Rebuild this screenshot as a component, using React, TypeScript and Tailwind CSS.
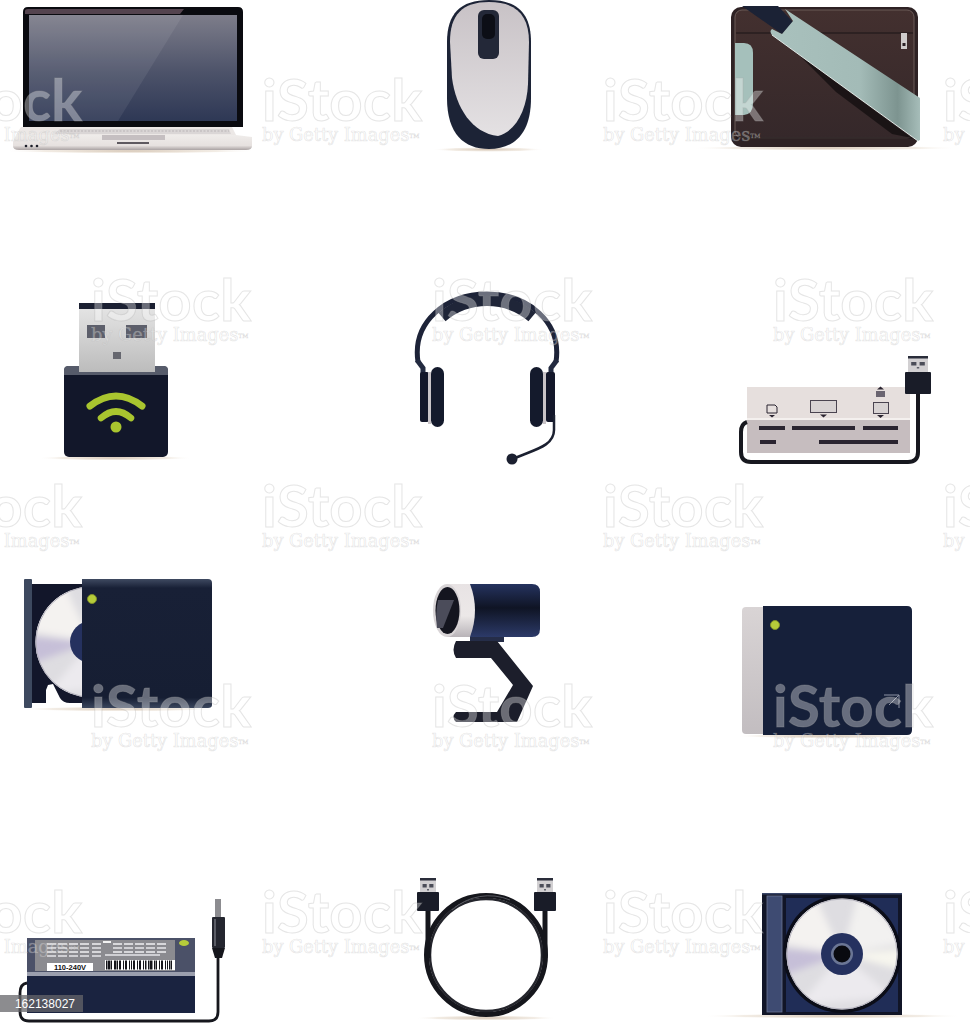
import React from 'react';

const COLS = [
  { x: 0, w: 323 },
  { x: 323, w: 324 },
  { x: 647, w: 323 },
];
const ROW_H = 256;

// watermark origins, they repeat in a staggered pattern over the whole picture
const MARKS = [
  { x: -78, y: 70 }, { x: 262, y: 70 }, { x: 603, y: 70 }, { x: 943, y: 70 },
  { x: 91, y: 270 }, { x: 432, y: 270 }, { x: 773, y: 270 },
  { x: -78, y: 476 }, { x: 262, y: 476 }, { x: 603, y: 476 }, { x: 943, y: 476 },
  { x: 91, y: 676 }, { x: 432, y: 676 }, { x: 773, y: 676 },
  { x: -78, y: 882 }, { x: 262, y: 882 }, { x: 603, y: 882 }, { x: 943, y: 882 },
];

function Cell({ col, row, children }: { col: number; row: number; children: React.ReactNode }) {
  const { x, w } = COLS[col];
  return (
    <svg width={w} height={ROW_H} viewBox={`${x} ${row * ROW_H} ${w} ${ROW_H}`} className="block">
      {children}
    </svg>
  );
}

function Floor({ id, cx, cy, rx }: { id: string; cx: number; cy: number; rx: number }) {
  return (
    <>
      <defs>
        <radialGradient id={id}>
          <stop offset="0%" stopColor="#cdbba8" stopOpacity="0.9" />
          <stop offset="70%" stopColor="#e6dacb" stopOpacity="0.5" />
          <stop offset="100%" stopColor="#ffffff" stopOpacity="0" />
        </radialGradient>
      </defs>
      <ellipse cx={cx} cy={cy} rx={rx} ry={2.5} fill={`url(#${id})`} />
    </>
  );
}

// compact disc with soft light wedges
function Disc({ id, cx, cy, r, hub }: { id: string; cx: number; cy: number; r: number; hub: number }) {
  const wedge = (a: number, b: number) => {
    const p = (t: number) => `${cx + Math.cos((t * Math.PI) / 180) * r * 1.2} ${cy + Math.sin((t * Math.PI) / 180) * r * 1.2}`;
    return `M${cx} ${cy} L${p(a)} L${p(b)} Z`;
  };
  return (
    <>
      <defs>
        <clipPath id={`${id}-clip`}>
          <circle cx={cx} cy={cy} r={r} />
        </clipPath>
        <filter id={`${id}-blur`} x="-30%" y="-30%" width="160%" height="160%">
          <feGaussianBlur stdDeviation={r / 14} />
        </filter>
      </defs>
      <circle cx={cx} cy={cy} r={r} fill="#dedde1" />
      <g clipPath={`url(#${id}-clip)`}>
        <g filter={`url(#${id}-blur)`}>
          <path d={wedge(-75, -10)} fill="#f2f1f0" />
          <path d={wedge(-170, -115)} fill="#f4f2f0" />
          <path d={wedge(160, 185)} fill="#c6bfd8" />
          <path d={wedge(-5, 15)} fill="#f7f6ee" />
          <path d={wedge(40, 130)} fill="#eceaee" />
        </g>
      </g>
      <circle cx={cx} cy={cy} r={r - 0.5} fill="none" stroke="#b4b2bd" strokeWidth={1} />
      <circle cx={cx} cy={cy} r={hub} fill="#25315f" />
    </>
  );
}

function UsbHead({ x, y, w, h, plugH }: { x: number; y: number; w: number; h: number; plugH: number }) {
  const px = x + 3;
  const pw = w - 6;
  return (
    <>
      <rect x={px} y={y - plugH} width={pw} height={plugH} fill="#d2d0d2" />
      <rect x={px} y={y - plugH} width={pw} height={2.5} fill="#2a2d3a" />
      <rect x={px + pw * 0.16} y={y - plugH + 6} width={pw * 0.26} height={3.5} fill="#4b4d58" />
      <rect x={px + pw * 0.58} y={y - plugH + 6} width={pw * 0.26} height={3.5} fill="#4b4d58" />
      <rect x={px + pw * 0.44} y={y - plugH + 11} width={pw * 0.12} height={1.5} fill="#5e606a" />
      <rect x={x} y={y} width={w} height={h} rx={1} fill="#191c28" />
    </>
  );
}

// ---- row 1 ----
function Laptop() {
  return (
    <Cell col={0} row={0}>
      <defs>
        <linearGradient id="lap-screen" x1="0" y1="0" x2="0" y2="1">
          <stop offset="0%" stopColor="#7d7d8a" />
          <stop offset="55%" stopColor="#4c5269" />
          <stop offset="100%" stopColor="#2e3855" />
        </linearGradient>
        <linearGradient id="lap-base" x1="0" y1="0" x2="0" y2="1">
          <stop offset="0%" stopColor="#efecea" />
          <stop offset="70%" stopColor="#e6e1df" />
          <stop offset="100%" stopColor="#a9a2a2" />
        </linearGradient>
      </defs>
      <Floor id="lap-floor" cx={130} cy={151} rx={128} />
      <path d="M23 127 V12 Q23 7 28 7 H238 Q243 7 243 12 V127 Z" fill="#0a0b10" />
      <path d="M25 14 V11 Q25 9 28 9 H184 L180 14 Z" fill="#54444f" />
      <rect x={29} y={15} width={208} height={106} fill="url(#lap-screen)" />
      <path d="M29 15 H183 L118 121 H29 Z" fill="#ffffff" opacity="0.07" />
      <path d="M21 127 H232 L236 135 H16 Z" fill="#ece8e6" />
      <path d="M60 129 H229 L231 134 H54 Z" fill="#dad6d6" />
      <path d="M60 131 H229" stroke="#b9b4b6" strokeWidth="1" strokeDasharray="2 1.5" />
      <path d="M16 135 H236 L252 137 V146 Q252 150 246 150 H19 Q13 150 13 146 V142 Z" fill="url(#lap-base)" />
      <rect x={102} y={135} width={63} height={5} fill="#c5bfc1" />
      <rect x={117} y={142} width={32} height={2} fill="#5e5a60" />
      <circle cx={26} cy={146} r={1.3} fill="#1c1e28" />
      <circle cx={31.5} cy={146} r={1.3} fill="#1c1e28" />
      <circle cx={37} cy={146} r={1.3} fill="#1c1e28" />
    </Cell>
  );
}

function Mouse() {
  return (
    <Cell col={1} row={0}>
      <defs>
        <linearGradient id="mouse-body" x1="0" y1="0" x2="0" y2="1">
          <stop offset="0%" stopColor="#c8c2c6" />
          <stop offset="100%" stopColor="#e4e1e3" />
        </linearGradient>
      </defs>
      <Floor id="mouse-floor" cx={488} cy={149.5} rx={56} />
      <path d="M489 0 C460 0 447 14 447 42 L447 98 C447 134 464 149 489 149 C514 149 531 134 531 98 L531 42 C531 14 518 0 489 0 Z" fill="#1c2336" />
      <path d="M489 2 C462 2 450 15 450 42 L452 78 C456 108 472 133 498 136 C517 131 527 108 528 84 L529 42 C529 15 516 2 489 2 Z" fill="url(#mouse-body)" />
      <rect x={478} y={10} width={21} height={49} rx={6} fill="#232838" />
      <rect x={482} y={14} width={13} height={25} rx={5} fill="#0c0e16" />
    </Cell>
  );
}

function Bag() {
  return (
    <Cell col={2} row={0}>
      <defs>
        <linearGradient id="bag-body" x1="0" y1="0" x2="0" y2="1">
          <stop offset="0%" stopColor="#43302f" />
          <stop offset="100%" stopColor="#35282a" />
        </linearGradient>
        <linearGradient id="bag-strap" x1="0" y1="0" x2="1" y2="0">
          <stop offset="0%" stopColor="#a9c1bd" />
          <stop offset="60%" stopColor="#a3bbb7" />
          <stop offset="85%" stopColor="#7d9490" />
          <stop offset="100%" stopColor="#a6bdb9" />
        </linearGradient>
      </defs>
      <Floor id="bag-floor" cx={825} cy={148} rx={135} />
      <rect x={731} y={7} width={187} height={140} rx={10} fill="#2e2224" />
      <rect x={735} y={10} width={179} height={128} rx={7} fill="url(#bag-body)" stroke="#6a5a57" strokeWidth="1" />
      <path d="M736 138 H913" stroke="#1b1416" strokeWidth="1.2" />
      <path d="M736 33 H913" stroke="#1b1416" strokeWidth="1.2" />
      <rect x={901} y={33} width={6} height={16} fill="#cfcccb" />
      <rect x={902.5} y={43} width={3} height={3} fill="#2a2024" />
      <path d="M735 43 H744 Q753 43 753 53 V104 Q753 114 744 115 H735 Z" fill="#a5c0bb" />
      <path d="M800 56 L912 138 L892 134 L836 92 Z" fill="#120d0f" opacity="0.75" />
      <path d="M742 6 H778 L793 22 L782 34 Z" fill="#1b2235" />
      <path d="M785 9 L920 98 V140 L918 141 L772 35 Q769 31 772 29 L782 34 L793 21 Z" fill="url(#bag-strap)" />
      <path d="M772 35 L918 141" stroke="#dfe9e6" strokeWidth="1" />
    </Cell>
  );
}

// ---- row 2 ----
function UsbDongle() {
  return (
    <Cell col={0} row={1}>
      <defs>
        <linearGradient id="dongle-plug" x1="0" y1="0" x2="0" y2="1">
          <stop offset="0%" stopColor="#e3e3e3" />
          <stop offset="100%" stopColor="#bcbcbc" />
        </linearGradient>
      </defs>
      <Floor id="dongle-floor" cx={115} cy={458} rx={78} />
      <rect x={64} y={366} width={104} height={91} rx={5} fill="#12172a" />
      <path d="M64 375 V370 Q64 366 68 366 H164 Q168 366 168 370 V375 Z" fill="#565b6a" />
      <rect x={79} y={309} width={76} height={63} fill="url(#dongle-plug)" />
      <rect x={79} y={303} width={76} height={6} fill="#1b2032" />
      <rect x={87} y={325} width={18} height={13} fill="#5d5f6b" />
      <rect x={126} y={325} width={21} height={13} fill="#5d5f6b" />
      <rect x={113} y={352} width={8} height={7} fill="#66676f" />
      <path d="M90 406 Q116 386 142 406" fill="none" stroke="#a9c52f" strokeWidth="7" strokeLinecap="round" />
      <path d="M101 418 Q116 405 131 418" fill="none" stroke="#a9c52f" strokeWidth="6.5" strokeLinecap="round" />
      <circle cx={116} cy={427} r={5.5} fill="#a9c52f" />
    </Cell>
  );
}

function Headset() {
  return (
    <Cell col={1} row={1}>
      <path d="M418 362 C412 322 446 294 487 294 C528 294 562 322 556 362" fill="none" stroke="#1d2338" strokeWidth="5" />
      <path d="M442 317 C468 295 506 295 532 317" fill="none" stroke="#1f2538" strokeWidth="11" />
      <path d="M417 360 L423 368 V396 L428 396 L431 392" fill="none" stroke="#232a40" strokeWidth="5" />
      <path d="M557 360 L551 368 V396 L546 396 L543 392" fill="none" stroke="#232a40" strokeWidth="5" />
      <rect x={420} y={372} width={9} height={50} rx={2} fill="#13172a" />
      <rect x={428} y={372} width={3} height={52} fill="#c9c4c8" />
      <rect x={431} y={367} width={13} height={60} rx={6.5} fill="#141a2c" />
      <rect x={546} y={372} width={9} height={50} rx={2} fill="#13172a" />
      <rect x={543} y={372} width={3} height={52} fill="#c9c4c8" />
      <rect x={530} y={367} width={13} height={60} rx={6.5} fill="#141a2c" />
      <path d="M554 415 V430 C554 447 532 450 513 459" fill="none" stroke="#1b2030" strokeWidth="2.5" />
      <circle cx={512} cy={459} r={5.5} fill="#1b2030" />
    </Cell>
  );
}

function CardReader() {
  const dark = '#2a2430';
  return (
    <Cell col={2} row={1}>
      <rect x={747} y={387} width={163} height={32} fill="#e6dfdd" />
      <rect x={747} y={418} width={163} height={2} fill="#f4f0ee" />
      <rect x={747} y={420} width={163} height={33} fill="#c6bdbf" />
      <rect x={759} y={426} width={26} height={4} fill={dark} />
      <rect x={792} y={426} width={63} height={4} fill={dark} />
      <rect x={863} y={426} width={35} height={4} fill={dark} />
      <rect x={760} y={440} width={16} height={4} fill={dark} />
      <rect x={819} y={440} width={79} height={4} fill={dark} />
      <path d="M767 405 H775 L777 407 V413 H767 Z" fill="#e6dfdd" stroke={dark} strokeWidth="1" />
      <path d="M769 415 H775 L772 417.5 Z" fill={dark} />
      <rect x={810.5} y={400.5} width={26} height={12} fill="#d8d3d3" stroke="#4a4450" strokeWidth="1" />
      <path d="M820 414.5 H827 L823.5 417.5 Z" fill={dark} />
      <rect x={873.5} y={402.5} width={15} height={11} fill="#d8d3d3" stroke="#4a4450" strokeWidth="1" />
      <path d="M877 415 H884 L880.5 418 Z" fill={dark} />
      <rect x={876} y={391} width={9} height={6} fill="#6a6470" />
      <path d="M877 389.5 H884 L880.5 386.5 Z" fill={dark} />
      <path d="M918 394 V452 Q918 462 908 462 H751 Q741 462 741 452 V432 Q741 424 747 422" fill="none" stroke="#17181f" strokeWidth="4" />
      <UsbHead x={905} y={372} w={26} h={22} plugH={16} />
    </Cell>
  );
}

// ---- row 3 ----
function OpticalDrive() {
  return (
    <Cell col={0} row={2}>
      <defs>
        <linearGradient id="drive-body" x1="0" y1="0" x2="0" y2="1">
          <stop offset="0%" stopColor="#3f4a61" />
          <stop offset="7%" stopColor="#182036" />
          <stop offset="92%" stopColor="#161e33" />
          <stop offset="100%" stopColor="#3b465d" />
        </linearGradient>
      </defs>
      <Floor id="drive-floor" cx={120} cy={709} rx={100} />
      <rect x={32} y={584} width={52} height={119} fill="#12162a" />
      <path d="M48 685 L53 684 L60 698 Q63 703 70 703 H84 V706 H46 V690 Z" fill="#ffffff" />
      <Disc id="drive-disc" cx={91} cy={642} r={55.5} hub={21} />
      <rect x={24} y={579} width={8} height={129} rx={1} fill="#3d495f" />
      <path d="M82 579 H208 Q212 579 212 583 V705 Q212 708 208 708 H82 Z" fill="url(#drive-body)" />
      <circle cx={92} cy={599} r={4.5} fill="#b6cc3a" stroke="#7f8f2a" strokeWidth="1" />
    </Cell>
  );
}

function Webcam() {
  return (
    <Cell col={1} row={2}>
      <defs>
        <linearGradient id="cam-barrel" x1="0" y1="0" x2="0" y2="1">
          <stop offset="0%" stopColor="#25335f" />
          <stop offset="45%" stopColor="#0f1424" />
          <stop offset="100%" stopColor="#2c3a68" />
        </linearGradient>
        <linearGradient id="cam-ring" x1="0" y1="0" x2="0" y2="1">
          <stop offset="0%" stopColor="#e8e3e4" />
          <stop offset="60%" stopColor="#ece8e8" />
          <stop offset="100%" stopColor="#b8b3b8" />
        </linearGradient>
      </defs>
      <path d="M470 637 H504 V642 H470 Z" fill="#252d48" />
      <path d="M456 641 H497 L533 686 L517 722 H456 Q451 717 456 712 H497 L513 685 L491 658 H456 Q451 650 456 641 Z" fill="#1c1e2b" />
      <path d="M470 584 H532 Q540 584 540 592 V629 Q540 637 532 637 H470 Z" fill="url(#cam-barrel)" />
      <path d="M447 584 H470 Q480 610 470 637 H447 Z" fill="url(#cam-ring)" />
      <ellipse cx={447} cy={610.5} rx={14} ry={26.5} fill="#d8d4d6" />
      <ellipse cx={447.5} cy={610.5} rx={12} ry={23.5} fill="#14151f" />
      <path d="M438 600 L454 600 L443 628 L437 628 Q435 614 438 600 Z" fill="#4b4c5a" />
    </Cell>
  );
}

function ExternalDisk() {
  return (
    <Cell col={2} row={2}>
      <defs>
        <linearGradient id="hdd-side" x1="0" y1="0" x2="0" y2="1">
          <stop offset="0%" stopColor="#d9d4d5" />
          <stop offset="100%" stopColor="#c2bdc0" />
        </linearGradient>
      </defs>
      <Floor id="hdd-floor" cx={825} cy={736} rx={90} />
      <path d="M746 607 H763 V734 H746 Q742 734 742 730 V611 Q742 607 746 607 Z" fill="url(#hdd-side)" />
      <path d="M763 606 H907 Q912 606 912 611 V730 Q912 735 907 735 H763 Z" fill="#16203a" />
      <circle cx={775} cy={625} r={4.5} fill="#b6cc3a" stroke="#7f8f2a" strokeWidth="1" />
      <path d="M884 695 H899 V708 M899 695 L889 705" fill="none" stroke="#8d93a4" strokeWidth="1" />
    </Cell>
  );
}

// ---- row 4 ----
function Adapter() {
  const bars = [0, 2, 3, 5, 8, 9, 11, 13, 14, 17, 19, 20, 23, 25, 27, 28, 31, 33, 34, 37, 39, 42, 44, 45, 48, 50, 53, 55, 56, 59, 61, 63, 65];
  const fine = [47, 58, 69, 80, 92, 113, 124, 135, 146, 157];
  return (
    <Cell col={0} row={3}>
      <rect x={27} y={938} width={168} height={75} fill="#1a2340" />
      <rect x={27} y={938} width={168} height={35} fill="#4b5168" />
      <rect x={27} y={972} width={168} height={4} fill="#9b9fae" />
      <path d="M35 940 H175 V971 H35 Z" fill="#8b8b90" />
      {fine.map((x) => (
        <g key={x}>
          <rect x={x} y={943} width={9} height={2} fill="#d7d7da" />
          <rect x={x} y={947} width={9} height={2} fill="#cfcfd3" />
          <rect x={x} y={951} width={9} height={2} fill="#d7d7da" />
          {x < 100 && <rect x={x} y={955} width={9} height={2} fill="#cfcfd3" />}
        </g>
      ))}
      <rect x={103} y={941} width={8} height={2} fill="#f2f2f2" />
      <rect x={105} y={954} width={55} height={2} fill="#cfcfd3" />
      <rect x={47} y={963} width={46} height={8} fill="#ffffff" />
      <text x={70} y={969.8} textAnchor="middle" fontFamily="Liberation Sans, sans-serif" fontWeight="700" fontSize="7.5" fill="#111111">
        110-240V
      </text>
      <rect x={105} y={960} width={70} height={10} fill="#ffffff" />
      {bars.map((b) => (
        <rect key={b} x={106 + b} y={960.5} width={b % 3 === 0 ? 1.5 : 1} height={9} fill="#15151a" />
      ))}
      <ellipse cx={184} cy={943} rx={5} ry={3} fill="#b6cc3a" />
      <path d="M218 955 V1012 Q218 1021 209 1021 H29 Q20 1021 20 1012 V993 Q20 984 27 983" fill="none" stroke="#16171d" strokeWidth="2.8" />
      <rect x={215} y={899} width={6} height={19} fill="#8c8c90" />
      <rect x={212} y={917} width={13} height={31} rx={1} fill="#24262f" />
      <path d="M212 948 H225 L222 958 H215 Z" fill="#15161c" />
      <rect x={214} y={919} width={2} height={27} fill="#5b5d66" />
    </Cell>
  );
}

function Cable() {
  return (
    <Cell col={1} row={3}>
      <Floor id="cable-floor" cx={486} cy={1018} rx={72} />
      <circle cx={486} cy={955} r={59.5} fill="none" stroke="#15161c" strokeWidth="5" />
      <circle cx={486} cy={955} r={56} fill="none" stroke="#24252c" strokeWidth="2.5" />
      <path d="M452 910 A55 55 0 0 1 510 900" fill="none" stroke="#6a6b72" strokeWidth="0.8" />
      <path d="M428 911 V958" stroke="#15161c" strokeWidth="5" />
      <path d="M545 911 V958" stroke="#15161c" strokeWidth="5" />
      <UsbHead x={417} y={892} w={22} h={19} plugH={14} />
      <UsbHead x={534} y={892} w={22} h={19} plugH={14} />
    </Cell>
  );
}

function CdCase() {
  return (
    <Cell col={2} row={3}>
      <Floor id="cd-floor" cx={832} cy={1016} rx={132} />
      <rect x={762} y={893} width={140} height={122} fill="#111527" />
      <rect x={762} y={893} width={140} height={1.5} fill="#3a4668" />
      <rect x={767} y={896} width={15} height={116} fill="#3e4b72" stroke="#6a7492" strokeWidth="0.8" />
      <rect x={786} y={898} width={112} height={114} fill="#202d57" />
      <circle cx={842} cy={954} r={59} fill="#0b0d18" />
      <Disc id="cd-disc" cx={842} cy={954} r={55.5} hub={21} />
      <circle cx={842} cy={954} r={11} fill="#6b7695" />
      <circle cx={842} cy={954} r={8.5} fill="#090a10" />
    </Cell>
  );
}

function Watermark({ x, y }: { x: number; y: number }) {
  return (
    <div className="absolute w-[170px]" style={{ left: x, top: y }}>
      <div className="font-[Lato,sans-serif] text-[58px] leading-[58px] font-bold tracking-[0.3px] text-white/35 [-webkit-text-stroke:1px_rgba(170,170,170,0.3)]">
        iStock
      </div>
      <div className="mt-[-3px] whitespace-nowrap font-['DejaVu_Serif',serif] text-[17.8px] leading-[20px] text-white/30 [-webkit-text-stroke:0.7px_rgba(170,170,170,0.3)]">
        by Getty Images
        <sup className="text-[6px] [-webkit-text-stroke:0.4px_rgba(170,170,170,0.4)]">TM</sup>
      </div>
    </div>
  );
}

export default function App() {
  return (
    <div className="relative h-[1024px] w-[970px] overflow-hidden bg-white">
      <div className="grid grid-cols-[323px_324px_323px] grid-rows-[256px_256px_256px_256px]">
        <Laptop />
        <Mouse />
        <Bag />
        <UsbDongle />
        <Headset />
        <CardReader />
        <OpticalDrive />
        <Webcam />
        <ExternalDisk />
        <Adapter />
        <Cable />
        <CdCase />
      </div>

      {/* watermark and stock number sit on top of the icons */}
      {MARKS.map((m) => (
        <Watermark key={`${m.x}-${m.y}`} x={m.x} y={m.y} />
      ))}
      <div className="absolute bottom-[12px] left-0 flex h-[17px] w-[83px] items-center justify-end bg-[#66666a]/75 pr-[8px] font-['Liberation_Sans',sans-serif] text-[12px] leading-none text-white">
        162138027
      </div>
    </div>
  );
}
